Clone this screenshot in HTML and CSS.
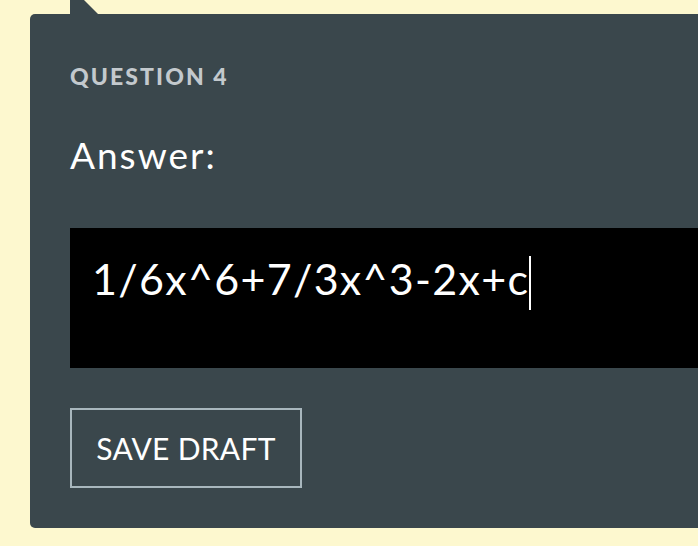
FILE: index.html
```html
<!DOCTYPE html>
<html>
<head>
<meta charset="utf-8">
<link rel="stylesheet" href="styles.css">
</head>
<body>
<div class="page">
  <div class="panel">
    <div class="tail"></div>
    <div class="label">QUESTION 4</div>
    <div class="prompt">Answer:</div>
    <div class="answer"><span class="answer-text">1/6x^6+7/3x^3-2x+c</span><span class="caret"></span></div>
    <button class="save">SAVE DRAFT</button>
  </div>
</div>
</body>
</html>
```
FILE: styles.css
```css
html, body {
  margin: 0;
  padding: 0;
  background: #fdf8cf;
  overflow: hidden;
}
.page {
  padding: 14px 0 0 30px;
  width: 698px;
  height: 546px;
  box-sizing: border-box;
}
.panel {
  position: relative;
  background: #3a474c;
  border-radius: 5px 0 0 5px;
  height: 514px;
  padding: 0 0 0 40px;
  box-sizing: border-box;
  font-family: Lato, "Liberation Sans", sans-serif;
  display: flex;
  flex-direction: column;
  align-items: flex-start;
}
.tail {
  position: absolute;
  left: 40px;
  top: -14px;
  width: 28px;
  height: 14px;
  background: #3a474c;
  clip-path: polygon(0 0, 14px 0, 28px 14px, 0 14px);
}
.label {
  margin-top: 50px;
  color: #c3c9cd;
  font-weight: 900;
  font-size: 23px;
  letter-spacing: 2.1px;
  line-height: 24px;
}
.prompt {
  margin-top: 47px;
  color: #ffffff;
  font-size: 37px;
  letter-spacing: 2px;
  line-height: 40px;
}
.answer {
  margin-top: 53px;
  align-self: stretch;
  background: #000;
  height: 140px;
  box-sizing: border-box;
  padding: 24px 0 0 22px;
  display: flex;
  align-items: flex-start;
}
.answer-text {
  color: #fff;
  font-size: 43px;
  letter-spacing: 1.3px;
  line-height: 54px;
}
.caret {
  width: 2px;
  height: 54px;
  background: #fff;
  margin-left: 0;
  margin-top: 4px;
}
.save {
  margin-top: 40px;
  width: 232px;
  height: 80px;
  background: transparent;
  border: 2px solid #a8b7bd;
  color: #fff;
  font-family: Lato, "Liberation Sans", sans-serif;
  font-size: 30px;
  font-weight: 400;
  letter-spacing: 0.3px;
  padding: 0;
  text-align: center;
}
```
